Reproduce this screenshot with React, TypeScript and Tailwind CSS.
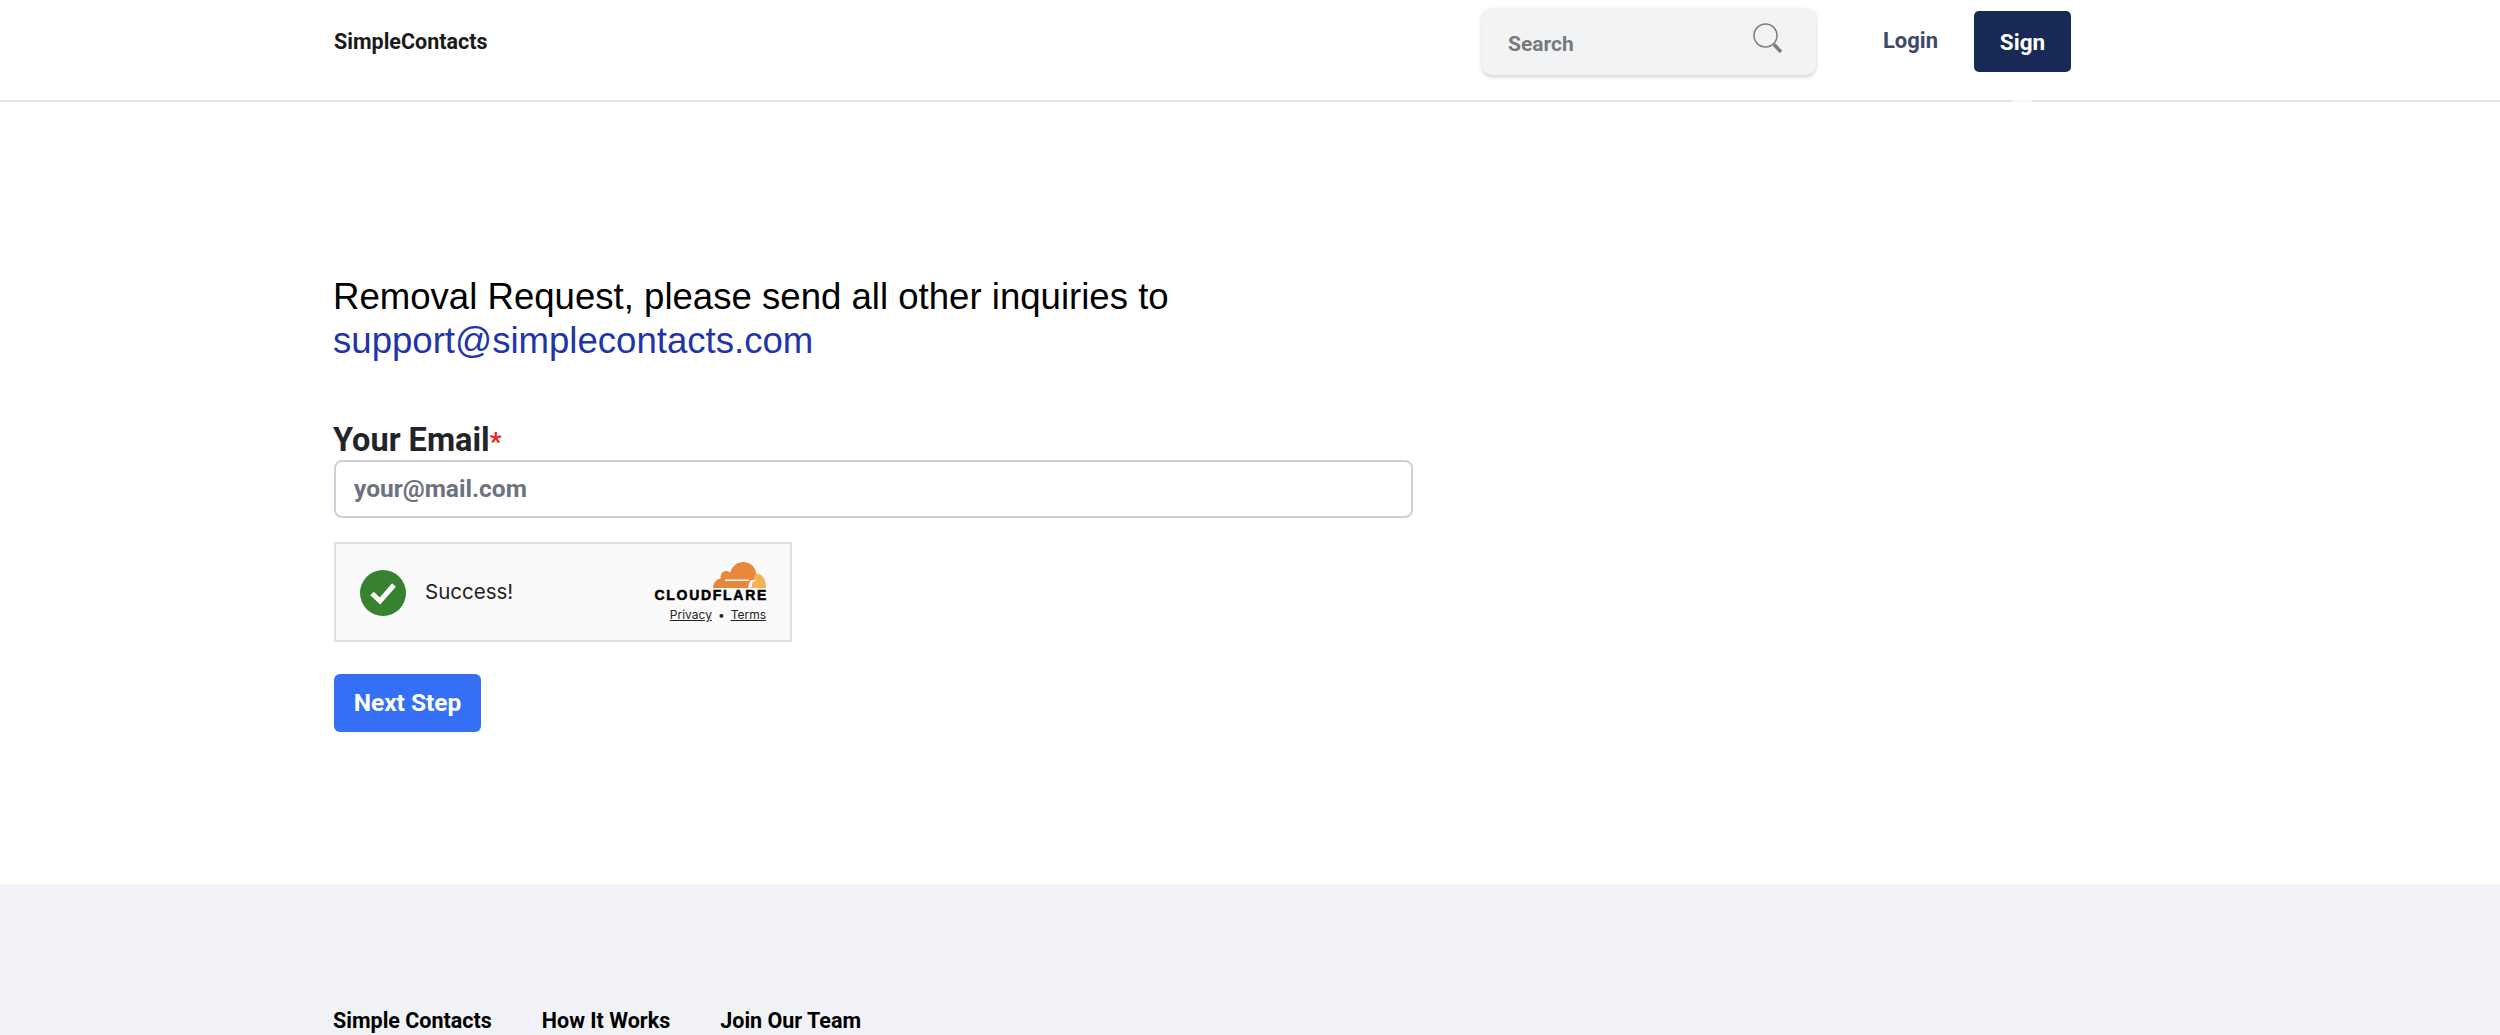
import React from 'react';

const CloudIcon = () => (
  <svg width="54" height="27" viewBox="0 0 54 27" className="block">
    {/* main cloud */}
    <path
      d="M1 27c0-1 .2-2.200.6-3.300C2.800 20.400 5.600 18 9 17.300c-.3-.8-.4-1.600-.3-2.400.3-3 3-5.200 6-5 1.300.1 2.500.7 3.500 1.500C20.400 5 25.400 1 31.300 1c6.700 0 12.300 5.100 12.900 11.700.1.900.1 1.800 0 2.700L41.400 27Z"
      fill="#e8873c"
    />
    {/* small cloud */}
    <path
      d="M44.400 12.600c-.2 0-.5 0-.7.1l-.5.2-1.900 6.500c-.1.400-.3 1.300-.3 1.500-.2 1.900-1.300 6.100-1.300 6.100H54c0-1.200 0-2.900-.2-4.100C53 17 49.100 12.600 44.400 12.600Z"
      fill="#f4b252"
    />
    {/* white cuts */}
    <path d="M13 18.600h24l-.3 1.400H13Z" fill="#f9f9f9" />
    <path d="M36 26.800 37.200 22.300 38.700 19.200 45 18.600 40.800 21.200 39.600 26.800Z" fill="#f9f9f9" />
  </svg>
);

const App: React.FC = () => {
  return (
    <div className="h-screen overflow-hidden bg-white font-['Roboto',sans-serif]">
      {/* Header */}
      <header className="relative h-[102px] border-b-2 border-[#e2e4e8]">
        <div className="ml-[334px] w-[1737px] h-full flex items-start">
          <div className="mt-[29px] text-[21.500px] leading-[26px] font-bold text-[#1a1a1a]">SimpleContacts</div>
          <div className="ml-auto mt-[8px] w-[334px] h-[67px] rounded-[10px] bg-[#f2f3f5] shadow-[0_2px_4px_rgba(0,0,0,0.18)] flex items-center justify-between pl-[26px] pr-[32px]">
            <span className="text-[21px] font-bold text-[#777a7c] mt-[7px]">Search</span>
            <svg width="32" height="38" viewBox="0 0 32 38" fill="none" stroke="#7b7d7e" className="mb-[3px]">
              <circle cx="13.500" cy="14.500" r="11.500" strokeWidth="1.500" />
              <path d="M22 23.500 29 31" strokeWidth="3.500" />
            </svg>
          </div>
          <div className="ml-[67px] mt-[27px] text-[22px] leading-[28px] font-bold text-[#3d4866]">Login</div>
          <button className="ml-[36px] mt-[11px] w-[97px] h-[61px] rounded-[5px] bg-[#172a56] text-white text-[22.500px] font-bold pt-[2px]">
            Sign
          </button>
        </div>
        {/* small gap in the divider under the Sign button */}
        <span className="absolute left-[2012px] bottom-[-2px] w-[20px] h-[2px] bg-white/70" />
      </header>

      {/* Form */}
      <main className="ml-[334px] h-[782px] pt-[173px]">
        <h1 className="font-['Liberation_Sans',sans-serif] text-[36.600px] leading-[44px] text-black -ml-[1px]">
          Removal Request, please send all other inquiries to
          <br />
          <a href="#" className="text-[#1f35a8]">support@simplecontacts.com</a>
        </h1>
        <div className="mt-[59px] w-[1079px]">
          <label className="block text-[32.500px] leading-[37px] font-bold text-[#212529] -ml-[1px]">
            Your Email<span className="text-[#e8262a] text-[26px]">*</span>
          </label>
          <input
            className="block mt-[-1px] w-full h-[58px] rounded-[8px] border-2 border-[#ccd1dd] px-[18px] pb-[2px] text-[24.500px] font-bold placeholder:text-[#6c727f] outline-none"
            placeholder="your@mail.com"
          />
        </div>
        <div className="mt-[24px] w-[458px] h-[100px] border-2 border-[#e0e0e0] bg-[#fafafa] flex items-center justify-between pl-[24px] pr-[24px]">
          <div className="flex items-center gap-[19px] pt-[1px]">
            <span className="w-[46px] h-[46px] rounded-full bg-[#38812f] flex items-center justify-center">
              <svg width="28" height="24" viewBox="0 0 28 24" fill="none" stroke="#fff" strokeWidth="5">
                <path d="M3 12.500 11 20 25 4" />
              </svg>
            </span>
            <span className="font-['Inter',sans-serif] text-[20.500px] text-[#232323]">Success!</span>
          </div>
          <div className="flex flex-col items-end">
            <CloudIcon />
            <span className="font-['Liberation_Sans',sans-serif] font-bold text-[14px] leading-[15px] tracking-[1.700px] mr-[-2px] text-black [-webkit-text-stroke:0.5px_#000]">
              CLOUDFLARE
            </span>
            <div className="font-['Inter',sans-serif] mt-[4px] text-[12px] leading-[16px] text-[#232323] flex gap-[6px]">
              <span className="underline">Privacy</span>
              <span>•</span>
              <span className="underline">Terms</span>
            </div>
          </div>
        </div>
        <button className="block mt-[32px] w-[147px] h-[58px] rounded-[6px] bg-[#346ff6] text-white text-[24.500px] font-bold">
          Next Step
        </button>
      </main>

      {/* Footer */}
      <footer className="bg-[#f1f2f6] h-[300px] pt-[123px] pl-[334px]">
        <div className="flex gap-[50px] text-[21.500px] leading-[28px] font-bold text-black -ml-[1px]">
          <span>Simple Contacts</span>
          <span>How It Works</span>
          <span>Join Our Team</span>
        </div>
      </footer>
    </div>
  );
};

export default App;
